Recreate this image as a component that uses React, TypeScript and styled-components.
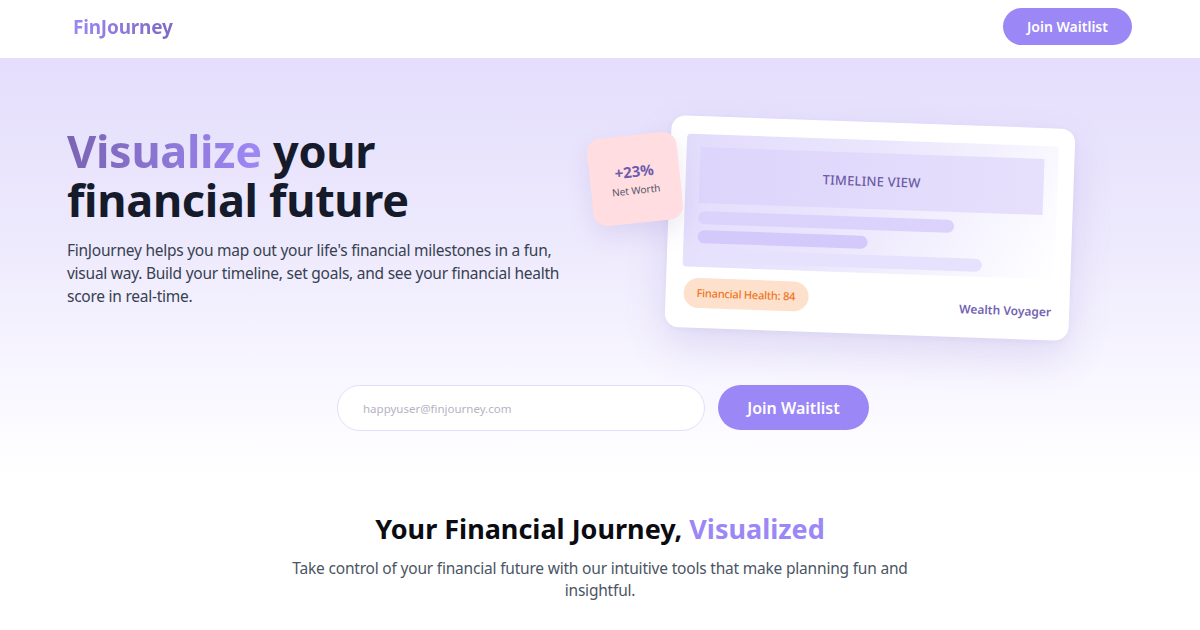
import React from "react";
import styled, { createGlobalStyle } from "styled-components";

const Global = createGlobalStyle`
  * { box-sizing: border-box; }
  html, body { margin: 0; padding: 0; background: #ffffff; }
  body { font-family: "Noto Sans", "Open Sans", sans-serif; color: #111827; }
`;

const Page = styled.div`
  width: 1200px;
  min-height: 630px;
  overflow: hidden;
`;

const Header = styled.header`
  height: 58px;
  background: #ffffff;
  display: flex;
  align-items: center;
  justify-content: space-between;
  padding: 0 68px 5px 73px;
`;

const Logo = styled.div`
  font-size: 19px;
  font-weight: 700;
  letter-spacing: -0.2px;
  background: linear-gradient(90deg, #9b87f5, #7e69c2);
  -webkit-background-clip: text;
  background-clip: text;
  color: transparent;
`;

const PillButton = styled.button<{ $big?: boolean }>`
  border: none;
  cursor: pointer;
  background: #9b87f5;
  color: #ffffff;
  font-family: inherit;
  font-weight: 600;
  border-radius: 999px;
  font-size: ${(p) => (p.$big ? "16px" : "14px")};
  width: ${(p) => (p.$big ? "151px" : "129px")};
  height: ${(p) => (p.$big ? "45px" : "37px")};
  padding: 0;
`;

const Hero = styled.section`
  background: linear-gradient(180deg, #e4defc 0%, #eeeafd 45%, #f8f6ff 75%, #ffffff 100%);
  padding: 64px 0 48px;
`;

const HeroGrid = styled.div`
  display: grid;
  grid-template-columns: 509px 1fr;
  column-gap: 48px;
  padding: 0 67px;
  align-items: start;
`;

const HeroText = styled.div`
  padding-top: 4px;
`;

const Title = styled.h1`
  margin: 0 0 15px;
  font-size: 45px;
  line-height: 49px;
  font-weight: 700;
  color: #161b2b;
  letter-spacing: -0.3px;
`;

const Accent = styled.span`
  background: linear-gradient(90deg, #7a64b3, #9e88f6);
  -webkit-background-clip: text;
  background-clip: text;
  color: transparent;
`;

const Lead = styled.p`
  margin: 0;
  font-size: 15.5px;
  line-height: 23px;
  letter-spacing: -0.25px;
  color: #374151;
  max-width: 510px;
`;

const Visual = styled.div`
  position: relative;
  width: 404px;
  height: 212px;
  margin-left: 44px;
`;

const Card = styled.div`
  width: 404px;
  height: 212px;
  background: #ffffff;
  border-radius: 14px;
  transform: rotate(2deg);
  box-shadow: 0 18px 40px rgba(110, 90, 190, 0.16), 0 2px 6px rgba(110, 90, 190, 0.06);
  padding: 18px 16px 18px;
  display: flex;
  flex-direction: column;
  gap: 10px;
`;

const Timeline = styled.div`
  height: 133px;
  flex: none;
  border-radius: 4px;
  background: linear-gradient(120deg, #e2dcfc 0%, #ebe6fd 45%, #ffffff 100%);
  padding: 13px 14px 0 14px;
  display: flex;
  flex-direction: column;
  gap: 6px;
`;

const Banner = styled.div`
  height: 56px;
  margin-bottom: 2px;
  background: linear-gradient(90deg, #ddd5fb, #e6e0fc);
  display: flex;
  align-items: center;
  justify-content: center;
  font-size: 13px;
  font-weight: 500;
  letter-spacing: 0.2px;
  color: #6b5ba6;
`;

const Bar = styled.div<{ $w: number; $tone: string }>`
  height: 13px;
  border-radius: 999px;
  width: ${(p) => p.$w}px;
  background: ${(p) => p.$tone};
`;

const CardFoot = styled.div`
  display: flex;
  align-items: center;
  justify-content: space-between;
  padding: 0 2px;
`;

const HealthPill = styled.div`
  background: #fde1cc;
  color: #f0731c;
  font-size: 11px;
  font-weight: 500;
  letter-spacing: -0.2px;
  border-radius: 999px;
  height: 30px;
  padding: 0 13px;
  display: flex;
  align-items: center;
`;

const Voyager = styled.div`
  font-size: 12px;
  font-weight: 600;
  color: #7463b4;
  margin-top: 14px;
`;

const Badge = styled.div`
  position: absolute;
  left: -78px;
  top: 13px;
  width: 90px;
  height: 88px;
  border-radius: 14px;
  background: #ffdde1;
  transform: rotate(-6deg);
  box-shadow: 0 10px 24px rgba(120, 90, 180, 0.14);
  display: flex;
  flex-direction: column;
  align-items: center;
  justify-content: center;
`;

const BadgeValue = styled.div`
  font-size: 15px;
  font-weight: 700;
  color: #6e5cae;
  line-height: 18px;
`;

const BadgeLabel = styled.div`
  font-size: 10px;
  color: #555566;
  margin-top: 3px;
`;

const Form = styled.form`
  display: flex;
  justify-content: center;
  gap: 13px;
  margin-top: 51px;
  padding-left: 6px;
`;

const EmailInput = styled.input`
  width: 368px;
  height: 46px;
  border-radius: 999px;
  border: 1px solid #e4defa;
  background: #ffffff;
  padding: 0 25px;
  font-family: inherit;
  font-size: 11.5px;
  color: #333;
  outline: none;
  &::placeholder { color: #b4b4c2; }
`;

const Features = styled.section`
  padding: 32px 0 0;
  text-align: center;
`;

const FeatureTitle = styled.h2`
  margin: 0 0 10px;
  font-size: 27px;
  line-height: 36px;
  font-weight: 700;
  color: #0b0b12;
`;

const Soft = styled.span`
  color: #9b87f5;
`;

const FeatureText = styled.p`
  margin: 0 auto;
  max-width: 630px;
  font-size: 15.5px;
  line-height: 22px;
  letter-spacing: -0.2px;
  color: #4b5563;
`;

export default function App() {
  return (
    <Page>
      <Global />
      <Header>
        <Logo>FinJourney</Logo>
        <PillButton>Join Waitlist</PillButton>
      </Header>
      <Hero>
        <HeroGrid>
          <HeroText>
            <Title>
              <Accent>Visualize</Accent> your
              <br />
              financial future
            </Title>
            <Lead>
              FinJourney helps you map out your life's financial milestones in a fun, visual way.
              Build your timeline, set goals, and see your financial health score in real-time.
            </Lead>
          </HeroText>
          <Visual>
            <Card>
              <Timeline>
                <Banner>TIMELINE VIEW</Banner>
                <Bar $w={256} $tone="#dbd3fb" />
                <Bar $w={170} $tone="#d3c9fa" />
                <Bar $w={285} $tone="#e6e1fc" />
              </Timeline>
              <CardFoot>
                <HealthPill>Financial Health: 84</HealthPill>
                <Voyager>Wealth Voyager</Voyager>
              </CardFoot>
            </Card>
            <Badge>
              <BadgeValue>+23%</BadgeValue>
              <BadgeLabel>Net Worth</BadgeLabel>
            </Badge>
          </Visual>
        </HeroGrid>
        <Form onSubmit={(e) => e.preventDefault()}>
          <EmailInput type="email" placeholder="happyuser@finjourney.com" />
          <PillButton $big type="submit">Join Waitlist</PillButton>
        </Form>
      </Hero>
      <Features>
        <FeatureTitle>
          Your Financial Journey, <Soft>Visualized</Soft>
        </FeatureTitle>
        <FeatureText>
          Take control of your financial future with our intuitive tools that make planning fun and
          insightful.
        </FeatureText>
      </Features>
    </Page>
  );
}
